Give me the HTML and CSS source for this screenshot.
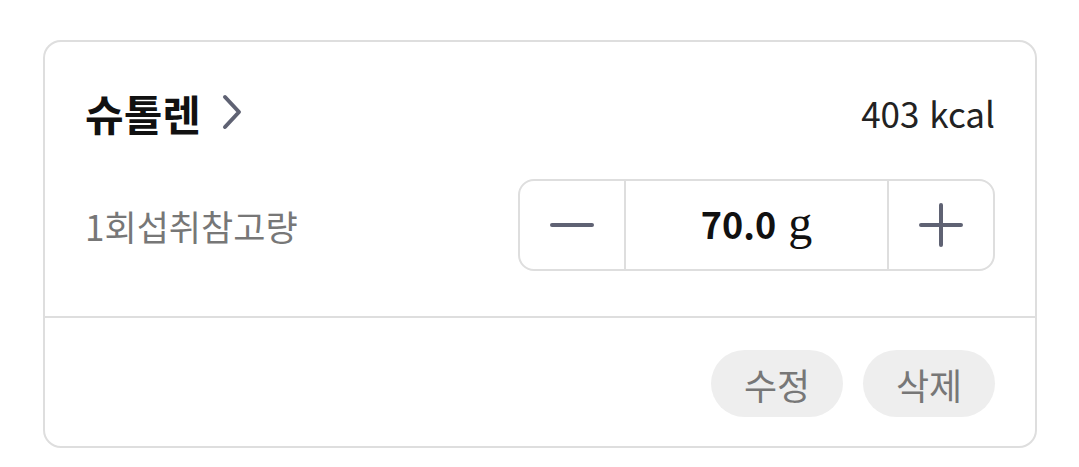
FILE: index.html
```html
<!DOCTYPE html>
<html lang="ko">
<head>
    <meta charset="UTF-8">
    <meta name="viewport" content="width=device-width, initial-scale=1.0">
    <title>슈톨렌</title>
    <link rel="stylesheet" href="styles.css">
</head>
<body>
    <div class="card">
        <div class="card-body">
            <div class="food-head">
                <a class="food-name" href="#">
                    슈톨렌
                    <svg class="chevron" width="22" height="36" viewBox="0 0 22 36">
                        <path d="M4 3 L18 18 L4 33" fill="none" stroke="#5f6273" stroke-width="4" stroke-linecap="round" stroke-linejoin="round"/>
                    </svg>
                </a>
                <span class="kcal">403 kcal</span>
            </div>
            <div class="serving">
                <span class="serving-label">1회섭취참고량</span>
                <div class="stepper">
                    <button class="step-btn" aria-label="minus">
                        <svg width="44" height="44" viewBox="0 0 44 44">
                            <path d="M2 22 H42" stroke="#5f6273" stroke-width="4" stroke-linecap="round"/>
                        </svg>
                    </button>
                    <div class="amount"><b>70.0</b><span class="unit">g</span></div>
                    <button class="step-btn" aria-label="plus">
                        <svg width="44" height="44" viewBox="0 0 44 44">
                            <path d="M2 22 H42 M22 2 V42" stroke="#5f6273" stroke-width="4" stroke-linecap="round"/>
                        </svg>
                    </button>
                </div>
            </div>
        </div>
        <div class="card-foot">
            <button class="pill">수정</button>
            <button class="pill">삭제</button>
        </div>
    </div>
</body>
</html>
```

FILE: styles.css
```css
body {
    margin: 0;
    padding: 40px 42px 19px 43px;
    background-color: #fff;
    font-family: "Noto Sans CJK KR", "Noto Sans", sans-serif;
}
.card {
    border: 2px solid #dedede;
    border-radius: 18px;
    background-color: #fff;
}
.card-body {
    padding: 46px 40px 45px 40px;
    border-bottom: 2px solid #dedede;
}
.food-head {
    display: flex;
    justify-content: space-between;
    align-items: center;
    height: 48px;
}
.food-name {
    display: flex;
    align-items: center;
    gap: 20px;
    font-size: 42px;
    font-weight: 700;
    color: #111;
    text-decoration: none;
}
.kcal {
    font-size: 35px;
    color: #222;
}
.serving {
    display: flex;
    justify-content: space-between;
    align-items: center;
    margin-top: 43px;
}
.serving-label {
    font-size: 35px;
    color: #777;
}
.stepper {
    display: flex;
    width: 477px;
    height: 92px;
    box-sizing: border-box;
    border: 2px solid #dedede;
    border-radius: 16px;
}
.step-btn {
    width: 104px;
    border: none;
    background: none;
    padding: 0;
    display: flex;
    align-items: center;
    justify-content: center;
}
.amount {
    flex: 1;
    display: flex;
    align-items: baseline;
    justify-content: center;
    gap: 12px;
    padding-top: 16px;
    border-left: 2px solid #dedede;
    border-right: 2px solid #dedede;
    font-size: 36px;
    color: #111;
}
.unit {
    font-family: "Liberation Serif", serif;
    font-size: 48px;
    line-height: 1;
}
.card-foot {
    display: flex;
    justify-content: flex-end;
    gap: 20px;
    padding: 32px 40px 29px 40px;
}
.pill {
    width: 132px;
    height: 67px;
    border: none;
    border-radius: 34px;
    background-color: #eeeeee;
    color: #777;
    font-family: "Noto Sans CJK KR", sans-serif;
    font-size: 36px;
}
```
